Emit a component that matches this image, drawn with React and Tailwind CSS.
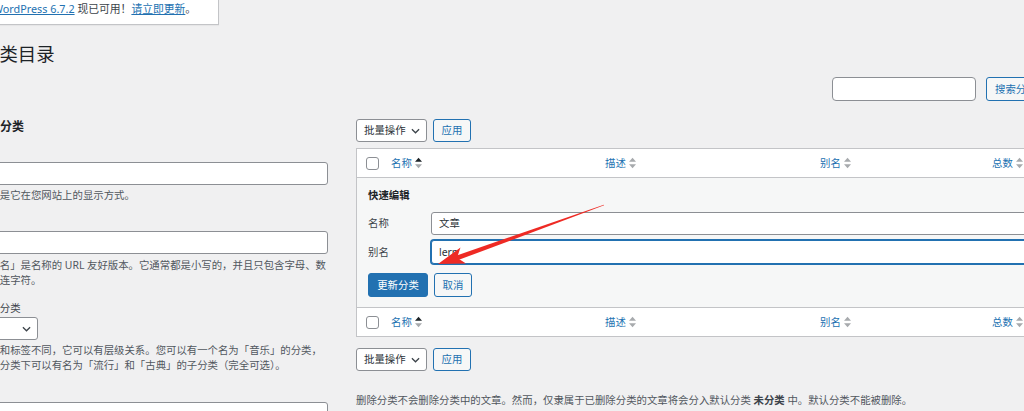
import React from 'react';

// sorting indicator (up / down carets)
const SortIcon = ({ active = false }) => (
    <svg width="7" height="12" viewBox="0 0 8 12" className="ml-[3px] shrink-0">
        <path d="M4 0 L8 4.6 L0 4.6 Z" fill={active ? '#1d2327' : '#a7aaad'} />
        <path d="M0 7.4 L8 7.4 L4 12 Z" fill="#a7aaad" />
    </svg>
);

const Chevron = () => (
    <svg width="9" height="6" viewBox="0 0 10 6" className="shrink-0">
        <path d="M1 1l4 4 4-4" stroke="#3c434a" strokeWidth="1.4" fill="none" />
    </svg>
);

const Checkbox = () => (
    <div className="w-[13px] h-[13px] rounded-[3px] border border-[#8c8f94] bg-white"></div>
);

function HeadRow() {
    return (
        <div className="grid grid-cols-[24px_214px_215px_172px_1fr] h-[28px] items-center text-[#2271b1]">
            <div className="pl-[9px] flex items-center"><Checkbox /></div>
            <div className="pl-[10px] flex items-center">名称<SortIcon active /></div>
            <div className="pl-[10px] flex items-center">描述<SortIcon /></div>
            <div className="pl-[10px] flex items-center">别名<SortIcon /></div>
            <div className="pl-[10px] flex items-center">总数<SortIcon /></div>
        </div>
    );
}

function BulkActions() {
    return (
        <div className="flex gap-[6px]">
            <div className="w-[71px] h-[23px] rounded-[3px] border border-[#8c8f94] bg-white flex items-center justify-between pl-[7px] pr-[6px] text-[#2c3338]">
                批量操作 <Chevron />
            </div>
            <div className="w-[38px] h-[23px] rounded-[3px] border border-[#2271b1] bg-[#f6f7f7] text-[#2271b1] flex items-center justify-center">
                应用
            </div>
        </div>
    );
}

export default function App() {
    return (
        <div className="relative w-[1024px] h-[411px] overflow-hidden bg-[#f0f0f1] text-[#3c434a] text-[10.4px] leading-[15px] font-['Noto_Sans','Noto_Sans_CJK_SC',sans-serif]">
            <div className="ml-[-21px]">
                {/* update notice */}
                <div className="inline-flex mt-[-8px] ml-[-1px] bg-white border border-[#c3c4c7] border-l-[3px] border-l-[#dba617] shadow-[0_1px_1px_rgba(0,0,0,0.04)] pl-[12px] pr-[22px] py-[8px] text-[10.8px] leading-[15px] whitespace-nowrap">
                    <span className="text-[#2271b1] underline">WordPress 6.7.2</span>
                    <span>&nbsp;现已可用！</span>
                    <span className="text-[#2271b1] underline">请立即更新</span>
                    <span>。</span>
                </div>

                <h1 className="mt-[17px] pl-[2px] text-[18.4px] leading-[24px] text-[#1d2327]">分类目录</h1>

                {/* search */}
                <div className="flex gap-[10px] mt-[11px] pl-[853px]">
                    <div className="w-[144px] h-[24px] shrink-0 rounded-[4px] border border-[#8c8f94] bg-white"></div>
                    <div className="h-[24px] shrink-0 px-[8px] rounded-[3px] border border-[#2271b1] bg-[#f6f7f7] text-[#2271b1] flex items-center whitespace-nowrap">
                        搜索分类
                    </div>
                </div>

                <div className="flex">
                    {/* left column: add new */}
                    <div className="w-[349px] shrink-0">
                        <h2 className="mt-[17px] ml-[-3px] text-[12px] leading-[18px] font-semibold text-[#1d2327]">添加分类</h2>

                        <label className="block mt-[8px] leading-[18px]">名称</label>
                        <div className="h-[23px] rounded-[3px] border border-[#8c8f94] bg-white"></div>
                        <p className="mt-[3px] text-[#50575e]">名称是它在您网站上的显示方式。</p>

                        <label className="block mt-[10px] leading-[18px]">别名</label>
                        <div className="h-[23px] rounded-[3px] border border-[#8c8f94] bg-white"></div>
                        <p className="mt-[4px] text-[#50575e] whitespace-nowrap">
                            「别名」是名称的 URL 友好版本。它通常都是小写的，并且只包含字母、数<br />字和连字符。
                        </p>

                        <label className="block mt-[11px] leading-[18px]">父级分类</label>
                        <div className="w-[59px] h-[23px] rounded-[3px] border border-[#8c8f94] bg-white flex items-center justify-between pl-[8px] pr-[6px]">
                            无 <Chevron />
                        </div>
                        <p className="mt-[3px] text-[#50575e] whitespace-nowrap">
                            分类和标签不同，它可以有层级关系。您可以有一个名为「音乐」的分类，<br />在该分类下可以有名为「流行」和「古典」的子分类（完全可选）。
                        </p>

                        <label className="block mt-[11px] leading-[18px]">描述</label>
                        <div className="h-[60px] rounded-[3px] border border-[#8c8f94] bg-white"></div>
                    </div>

                    {/* right column: list table */}
                    <div className="w-[740px] shrink-0 ml-[28px]">
                        <div className="mt-[18px]">
                            <BulkActions />
                        </div>

                        <div className="mt-[6px] border border-[#c3c4c7] bg-white">
                            <div className="border-b border-[#c3c4c7]">
                                <HeadRow />
                            </div>

                            {/* quick edit */}
                            <div className="bg-[#f6f7f7] pl-[11px] pr-[11px] pt-[8px] pb-[10px]">
                                <div className="leading-[18px] font-semibold text-[#1d2327]">快速编辑</div>
                                <div className="flex items-center mt-[8px]">
                                    <span className="w-[63px] shrink-0">名称</span>
                                    <div className="flex-1 h-[23px] rounded-[3px] border border-[#8c8f94] bg-white flex items-center pl-[7px] text-[#2c3338]">文章</div>
                                </div>
                                <div className="flex items-center mt-[5px]">
                                    <span className="w-[63px] shrink-0">别名</span>
                                    <div className="flex-1 h-[24px] rounded-[3px] border border-[#2271b1] shadow-[0_0_0_1px_#2271b1] bg-white flex items-center pl-[7px] text-[#2c3338]">lern</div>
                                </div>
                                <div className="flex gap-[6px] mt-[9px]">
                                    <div className="w-[60px] h-[24px] rounded-[3px] bg-[#2271b1] border border-[#2271b1] text-white flex items-center justify-center">更新分类</div>
                                    <div className="w-[38px] h-[24px] rounded-[3px] border border-[#2271b1] bg-[#f6f7f7] text-[#2271b1] flex items-center justify-center">取消</div>
                                </div>
                            </div>

                            <div className="border-t border-[#c3c4c7]">
                                <HeadRow />
                            </div>
                        </div>

                        <div className="mt-[11px]">
                            <BulkActions />
                        </div>

                        <p className="mt-[20px] leading-[18px] text-[#50575e] whitespace-nowrap">
                            删除分类不会删除分类中的文章。然而，仅隶属于已删除分类的文章将会分入默认分类 <strong className="font-semibold text-[#3c434a]">未分类</strong> 中。默认分类不能被删除。
                        </p>
                    </div>
                </div>
            </div>

            {/* red annotation arrow */}
            <svg className="absolute left-0 top-0 pointer-events-none" width="1024" height="411" viewBox="0 0 1024 411">
                <polygon points="604.1,205.3 603.9,204.7 456.0,255.7 457.6,260.3" fill="#ee2a24" />
                <polygon points="438,264 466,263.6 457,257.8 460.5,247.5" fill="#ee2a24" />
            </svg>
        </div>
    );
}
